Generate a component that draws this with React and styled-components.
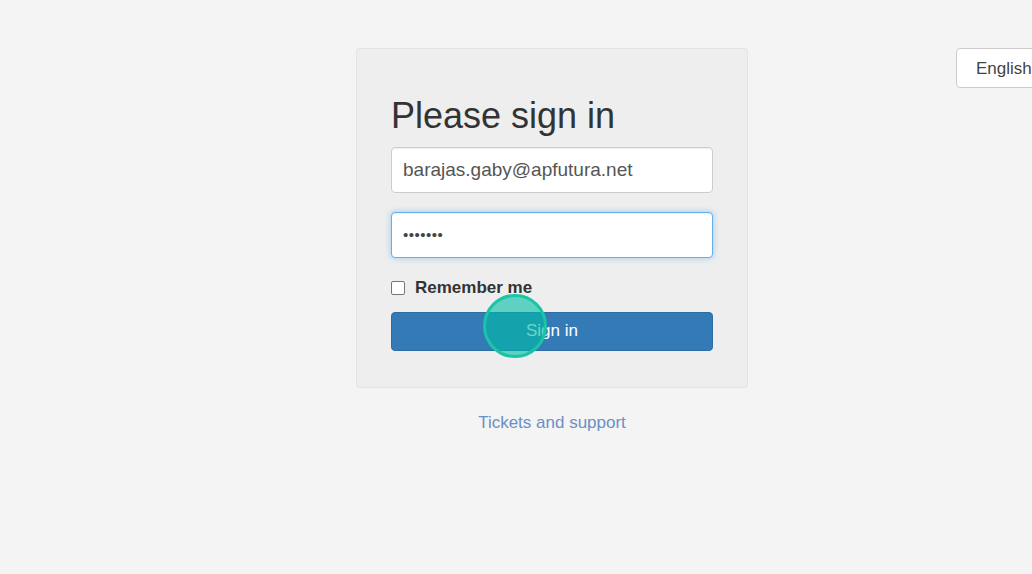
import React from "react";
import styled, { createGlobalStyle } from "styled-components";

const GlobalStyle = createGlobalStyle`
  html, body {
    margin: 0;
    padding: 0;
    background: #f4f4f4;
    font-family: "Liberation Sans", Arial, sans-serif;
    color: #333;
  }
  body {
    overflow: hidden;
  }
`;

const Page = styled.div`
  display: grid;
  grid-template-columns: 356px 392px 1fr;
  width: 1032px;
  height: 574px;
  overflow: hidden;
  padding-top: 48px;
  box-sizing: border-box;
`;

const Main = styled.div`
  grid-column: 2;
  display: flex;
  flex-direction: column;
  align-items: center;
`;

const Card = styled.form`
  width: 100%;
  box-sizing: border-box;
  background: #eeeeee;
  border: 1px solid #e3e3e3;
  border-radius: 4px;
  padding: 47px 34px 36px 34px;
  display: flex;
  flex-direction: column;
`;

const Heading = styled.h2`
  margin: 0 0 11px 0;
  font-size: 36px;
  font-weight: 400;
  line-height: 1.1;
  color: #333;
`;

const Input = styled.div`
  height: 46px;
  box-sizing: border-box;
  background: #fff;
  border: 1px solid ${(p) => (p.focused ? "#66afe9" : "#ccc")};
  border-radius: 4px;
  padding: 0 11px;
  display: flex;
  align-items: center;
  font-size: 19px;
  color: #555;
  margin-bottom: ${(p) => p.gap || 0}px;
  box-shadow: ${(p) =>
    p.focused
      ? "inset 0 1px 1px rgba(0,0,0,.075), 0 0 6px rgba(102,175,233,.6)"
      : "inset 0 1px 1px rgba(0,0,0,.075)"};
`;

const Dots = styled.span`
  font-size: 15px;
  letter-spacing: 0.5px;
  color: #444;
`;

const CheckRow = styled.label`
  display: flex;
  align-items: center;
  gap: 10px;
  margin: 20px 0 14px 0;
  font-size: 17px;
  font-weight: 700;
  color: #333;
  line-height: 20px;
`;

const Box = styled.span`
  width: 12px;
  height: 12px;
  border: 1px solid #767676;
  border-radius: 2px;
  background: #fff;
`;

const ButtonWrap = styled.div`
  position: relative;
`;

const Button = styled.div`
  height: 39px;
  box-sizing: border-box;
  background: #337ab7;
  border: 1px solid #2e6da4;
  border-radius: 4px;
  color: #fff;
  font-size: 17px;
  display: flex;
  align-items: center;
  justify-content: center;
`;

const ClickMarker = styled.span`
  position: absolute;
  left: 92px;
  top: -18px;
  width: 64px;
  height: 64px;
  box-sizing: border-box;
  border-radius: 50%;
  border: 3px solid #1ac4a4;
  background: rgba(0, 190, 165, 0.6);
`;

const SupportLink = styled.a`
  margin-top: 25px;
  font-size: 17px;
  color: #6b8fc6;
  text-decoration: none;
`;

const Side = styled.div`
  grid-column: 3;
  display: flex;
  justify-content: flex-end;
  align-items: flex-start;
  margin-right: -70px;
`;

const LangButton = styled.div`
  height: 40px;
  box-sizing: border-box;
  background: #fff;
  border: 1px solid #ccc;
  border-radius: 4px;
  padding: 1px 19px 0 19px;
  display: flex;
  align-items: center;
  font-size: 17px;
  color: #444;
  width: 146px;
`;

export default function App() {
  return (
    <>
      <GlobalStyle />
      <Page>
        <Main>
          <Card>
            <Heading>Please sign in</Heading>
            <Input gap={19}>barajas.gaby@apfutura.net</Input>
            <Input focused>
              <Dots>•••••••</Dots>
            </Input>
            <CheckRow>
              <Box />
              Remember me
            </CheckRow>
            <ButtonWrap>
              <Button>Sign in</Button>
              <ClickMarker />
            </ButtonWrap>
          </Card>
          <SupportLink>Tickets and support</SupportLink>
        </Main>
        <Side>
          <LangButton>English</LangButton>
        </Side>
      </Page>
    </>
  );
}
